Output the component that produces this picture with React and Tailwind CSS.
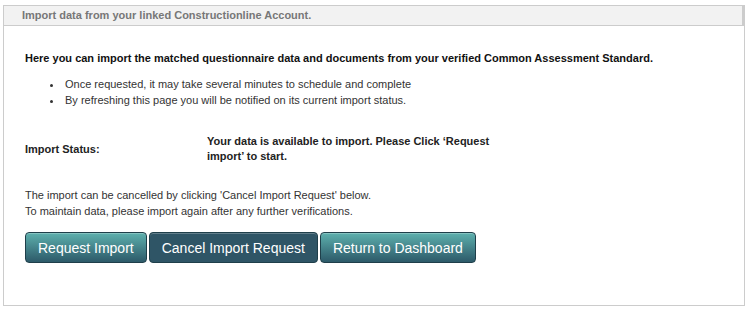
export default function App() {
  const btn =
    "h-[31px] px-[12px] rounded-[4px] border border-[#1f3f4a] text-white text-[14px] leading-none shadow-[inset_0_1px_0_rgba(255,255,255,0.25)]";
  return (
    <div className="w-[750px] h-[311px] bg-white font-['Liberation_Sans',Arial,sans-serif] pt-[5px] pl-[3px]">
      <div className="w-[742px] h-[301px] border border-[#cccccc] flex flex-col">
        <div className="h-[20px] bg-[#f2f2f2] border-b border-r-2 border-[#cccccc] flex items-center pl-[18px]">
          <span className="text-[11px] font-bold text-[#777777]">
            Import data from your linked Constructionline Account.
          </span>
        </div>
        <div className="pl-[21px] pt-[25px] text-[#222222]">
          <p className="text-[11px] font-bold text-[#111111] leading-[14px]">
            Here you can import the matched questionnaire data and documents from your verified Common Assessment Standard.
          </p>
          <ul className="mt-[11px] pl-[38px] text-[11px] leading-[16px] list-disc text-[#333333]">
            <li className="pl-[2px]">Once requested, it may take several minutes to schedule and complete</li>
            <li className="pl-[2px]">By refreshing this page you will be notified on its current import status.</li>
          </ul>
          <div className="mt-[26px] flex items-center">
            <div className="w-[182px] text-[11px] font-bold text-[#222222]">Import Status:</div>
            <div className="w-[300px] text-[11px] font-bold text-[#222222] leading-[15px]">
              Your data is available to import. Please Click ‘Request import’ to start.
            </div>
          </div>
          <div className="mt-[23px] text-[11px] leading-[16px] text-[#333333]">
            <p>The import can be cancelled by clicking 'Cancel Import Request' below.</p>
            <p>To maintain data, please import again after any further verifications.</p>
          </div>
          <div className="mt-[13px] flex gap-[2px]">
            <button className={btn + " bg-gradient-to-b from-[#5eb1ae] to-[#2d5a69]"}>Request Import</button>
            <button className={btn + " bg-[#2f5566]"}>Cancel Import Request</button>
            <button className={btn + " bg-gradient-to-b from-[#5eb1ae] to-[#2d5a69]"}>Return to Dashboard</button>
          </div>
        </div>
      </div>
    </div>
  );
}
